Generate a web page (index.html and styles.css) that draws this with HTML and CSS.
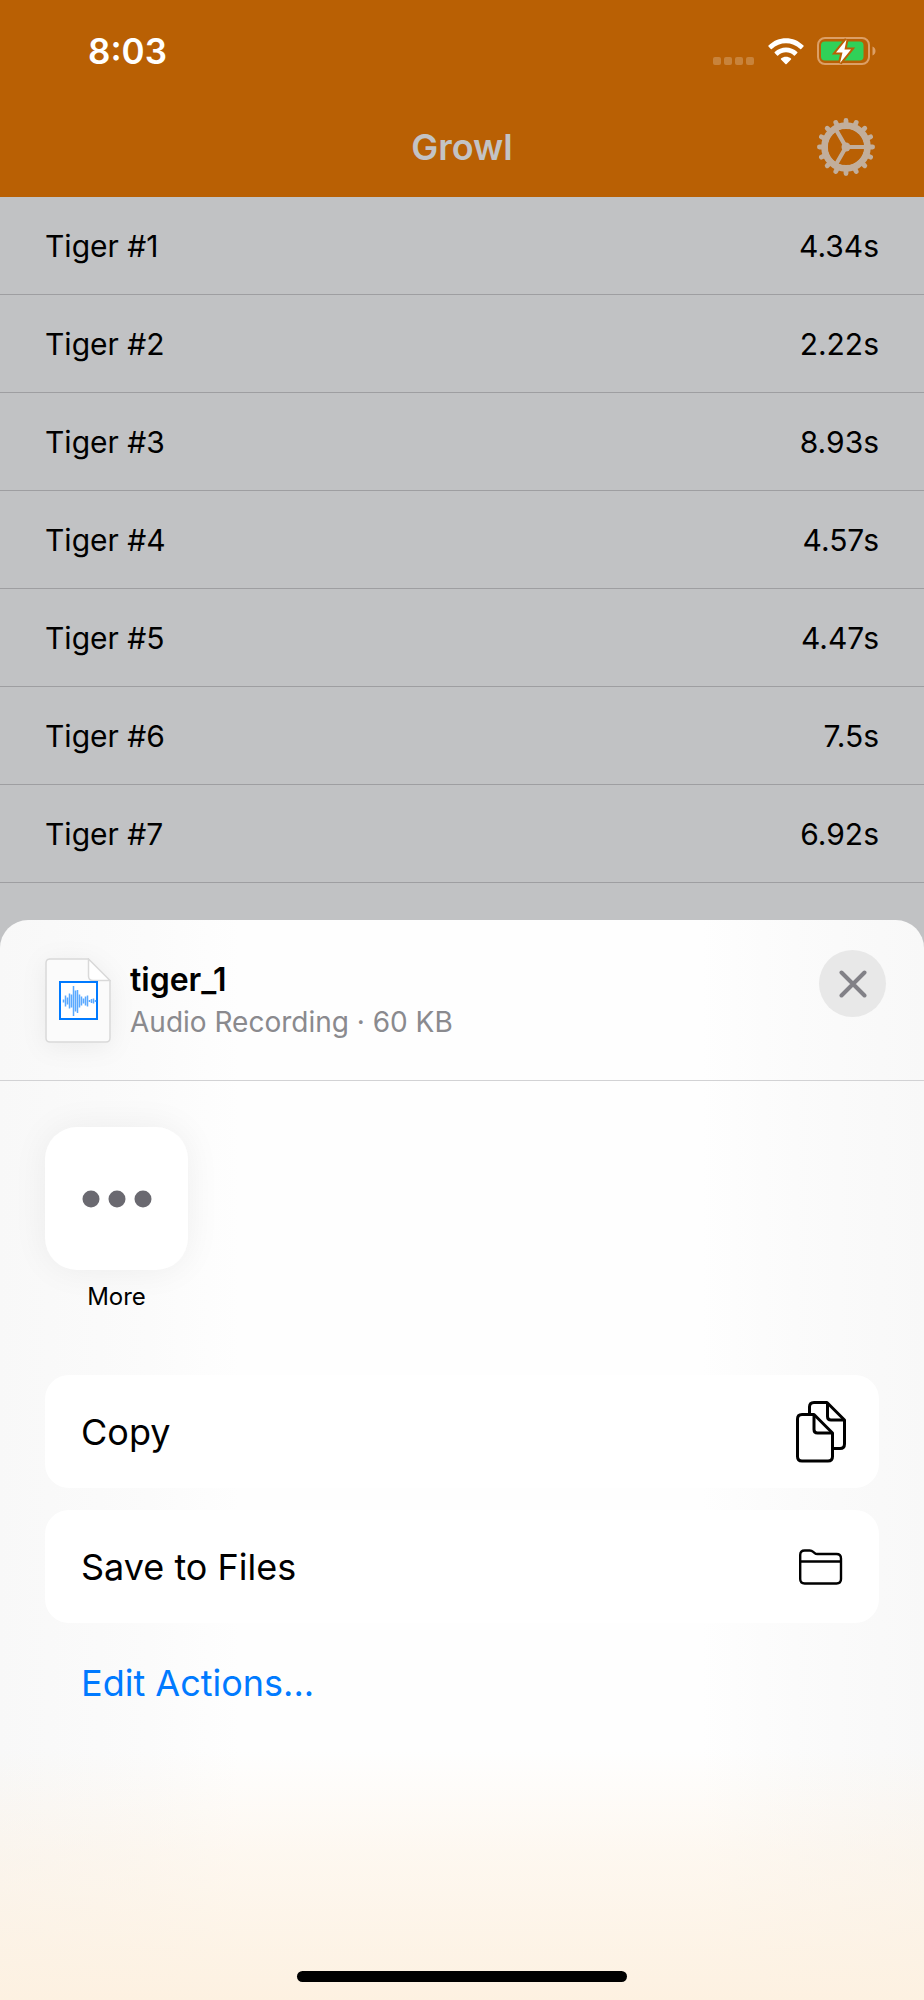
FILE: index.html
```html
<!DOCTYPE html>
<html lang="en">
<head>
<meta charset="utf-8">
<meta name="viewport" content="width=device-width, initial-scale=1">
<title>Growl</title>
<link rel="stylesheet" href="styles.css">
</head>
<body>
<div class="app">
  <header class="top">
    <div class="status">
      <span class="time">8:03</span>
      <div class="status-icons">
        <svg width="42" height="8" viewBox="0 0 42 8" fill="#fff" fill-opacity=".22" aria-hidden="true"><rect width="8" height="8" rx="2"/><rect x="11" width="8" height="8" rx="2"/><rect x="22" width="8" height="8" rx="2"/><rect x="33" width="8" height="8" rx="2"/></svg>
        <svg width="36" height="27" viewBox="0 0 36 27" fill="#fff" aria-hidden="true">
          <path d="M.5 7.6C10-2.2 26-2.2 35.5 7.6c.3.3.3.7 0 1l-2.300 2.400c-.3.3-.7.300-1 0-8-7.700-20.400-7.700-28.400 0-.3.300-.7.300-1 0L.5 8.600c-.3-.3-.3-.7 0-1Z"/>
          <path d="M6.700 14.100c6.200-6.100 16.400-6.100 22.600 0 .3.300.3.700 0 1L26.900 17.500c-.3.300-.7.300-1 0-4.500-4.200-11.300-4.200-15.800 0-.3.300-.7.300-1 0L6.700 15.100c-.3-.3-.3-.7 0-1Z"/>
          <path d="M13 20.500c2.800-2.400 7.200-2.400 10 0 .3.300.3.700 0 1l-4.400 4.500c-.4.400-.8.400-1.200 0L13 21.500c-.3-.3-.3-.7 0-1Z"/>
        </svg>
        <svg width="59" height="28" viewBox="0 0 59 28" aria-hidden="true">
          <rect x="1" y="1" width="51" height="26" rx="7" fill="none" stroke="#dc9f66" stroke-width="2"/>
          <path d="M55.500 9.500c4 1.500 4 7.500 0 9Z" fill="#dc9f66"/>
          <rect x="4" y="4.500" width="42.500" height="19" rx="4" fill="#30d158"/>
          <path d="M29.500 2.500 19 15.500h6.500L23 26 34 12.500H27.500Z" fill="#fff" stroke="#b96004" stroke-width="4" paint-order="stroke"/>
        </svg>
      </div>
    </div>
    <div class="nav">
      <h1 class="nav-title">Growl</h1>
      <button class="settings" type="button" aria-label="Settings">
        <svg width="60" height="60" viewBox="-30 -30 60 60" fill="none" stroke="#c2ae9b" aria-hidden="true">
          <circle r="21.300" stroke-width="7"/>
          <g stroke-width="4.800" stroke-linecap="round">
            <path d="M0-26.600V26.600M-26.600 0H-22M22 0H26.600M-18.800-18.800-16-16M18.800-18.800 16-16M-18.800 18.800-16 16M18.800 18.800 16 16"/>
            <path d="M-10.200-24.600-8.500-21M10.200-24.600 8.500-21M-10.200 24.600-8.500 21M10.200 24.600 8.500 21M-24.600-10.200-21-8.500M24.600-10.200 21-8.500M-24.600 10.200-21 8.500M24.600 10.200 21 8.500"/>
          </g>
          <circle r="18" fill="#b96004" stroke="none"/>
          <path d="M0 0H19M0 0-9.500-16.500M0 0-9.500 16.500" stroke-width="4.200"/>
          <circle r="4.500" fill="#c2ae9b" stroke="none"/>
        </svg>
      </button>
    </div>
  </header>

  <ul class="tigers">
    <li class="tiger"><span>Tiger #1</span><span>4.34s</span></li>
    <li class="tiger"><span>Tiger #2</span><span>2.22s</span></li>
    <li class="tiger"><span>Tiger #3</span><span>8.93s</span></li>
    <li class="tiger"><span>Tiger #4</span><span>4.57s</span></li>
    <li class="tiger"><span>Tiger #5</span><span>4.47s</span></li>
    <li class="tiger"><span>Tiger #6</span><span>7.5s</span></li>
    <li class="tiger"><span>Tiger #7</span><span>6.92s</span></li>
  </ul>

  <section class="sheet" aria-label="Share">
    <header class="sheet-head">
      <svg class="file-icon" width="66" height="85" viewBox="0 0 66 85" aria-hidden="true">
        <path d="M4 1H43L65 23V80q0 4-4 4H5q-4 0-4-4V5q0-4 4-4Z" fill="#fbfbfb" stroke="#d9d9d9" stroke-width="1.500"/>
        <path d="M43.500 1V18q0 4.500 4.500 4.500H65Z" fill="#fff" stroke="#d9d9d9" stroke-width="1.500"/>
        <rect x="15" y="24" width="37" height="37" fill="#fff" stroke="#007aff" stroke-width="2"/>
        <path d="M18.500 41.500v3M20.500 37.500v11M22.500 39.500v7M24.500 35.500v15M26.500 36.500v13M28.500 28v30M30.500 32.500v21M32.500 32v23M34.500 36.500v13M36.500 38.500v9M38.500 40.500v5M40.500 38.500v9M42.500 37.500v11M44.500 42v2M46.500 41v4M48.500 40.500v5M50.500 42v2" stroke="#5aa9ff" stroke-width="1.500"/>
      </svg>
      <div class="file-text">
        <h2 class="file-name">tiger_1</h2>
        <p class="file-meta">Audio Recording · 60 KB</p>
      </div>
      <button class="close" type="button" aria-label="Close">
        <svg width="28" height="28" viewBox="0 0 28 28" fill="none" stroke="#828187" stroke-width="4" stroke-linecap="round" aria-hidden="true"><path d="M2.500 2.500 25.500 25.500M25.500 2.500 2.500 25.500"/></svg>
      </button>
    </header>

    <div class="apps">
      <button class="app-item" type="button">
        <span class="app-tile">
          <svg width="70" height="18" viewBox="0 0 70 18" fill="#6a6970" aria-hidden="true"><circle cx="9" cy="9" r="8.500"/><circle cx="35" cy="9" r="8.500"/><circle cx="61" cy="9" r="8.500"/></svg>
        </span>
        <span class="app-label">More</span>
      </button>
    </div>

    <div class="actions">
      <button class="action" type="button">
        <span>Copy</span>
        <svg width="50" height="62" viewBox="0 0 50 62" fill="none" stroke="#000" stroke-width="3" stroke-linejoin="round" aria-hidden="true">
          <path d="M13.500 13V6q0-4.500 4.500-4.500H31L48.500 19V43q0 4.500-4.500 4.500H37"/>
          <path d="M31.500 2V15.500q0 3.500 3.500 3.500H48"/>
          <path d="M6 13.500H18L36.500 32V55.500q0 4.500-4.500 4.500H6q-4.500 0-4.500-4.500V18q0-4.500 4.500-4.500Z"/>
          <path d="M18 14V28.500q0 3.500 3.500 3.500H36"/>
        </svg>
      </button>
      <button class="action" type="button">
        <span>Save to Files</span>
        <svg width="50" height="36" viewBox="0 0 50 36" fill="none" stroke="#000" stroke-width="2.400" stroke-linejoin="round" aria-hidden="true">
          <path d="M4.200 12V6q0-4.500 4.500-4.500h5q2 0 3.500 1.300l1.200 1q1.300 1.200 3 1.200H40.500q4.500 0 4.500 4.500V30q0 4.500-4.500 4.500H8.700Q4.200 34.500 4.200 30ZM4.200 12.500H45"/>
        </svg>
      </button>
      <button class="edit" type="button">Edit Actions...</button>
    </div>

    <div class="home-indicator"></div>
  </section>
</div>
</body>
</html>
```
FILE: styles.css
```css
* {
  box-sizing: border-box;
}

body {
  margin: 0;
  background: #c1c2c4;
  color: #000;
  font-family: Inter, "Liberation Sans", sans-serif;
}

h1, h2, p, ul {
  margin: 0;
  padding: 0;
}

button {
  padding: 0;
  border: 0;
  background: none;
  color: inherit;
  font: inherit;
  cursor: pointer;
}

svg {
  display: block;
  flex: none;
}

.app {
  display: flex;
  flex-direction: column;
  min-height: 100vh;
}

.top {
  background: #b96004;
}

.status {
  display: flex;
  justify-content: space-between;
  align-items: center;
  height: 101px;
  padding: 0 48px 0 88px;
}

.time {
  color: #fff;
  font-size: 35px;
  font-weight: 600;
}

.status-icons {
  display: flex;
  align-items: flex-end;
  gap: 13px;
}

.nav {
  display: grid;
  grid-template-columns: 1fr auto 1fr;
  align-items: center;
  height: 96px;
  padding: 0 48px 5px;
}

.nav-title {
  grid-column: 2;
  color: #c3c3c5;
  font-size: 36px;
  font-weight: 600;
}

.settings {
  justify-self: end;
}

.tigers {
  list-style: none;
  margin-bottom: 37px;
}

.tiger {
  display: flex;
  justify-content: space-between;
  align-items: center;
  height: 98px;
  padding: 0 45px;
  border-bottom: 1px solid #9e9ea1;
  font-size: 30px;
}

.sheet {
  display: flex;
  flex: 1;
  flex-direction: column;
  border-radius: 28px 28px 0 0;
  background:
    linear-gradient(to bottom, rgba(253, 241, 225, 0) 77%, rgba(253, 241, 225, 0.5) 87%, rgba(253, 241, 225, 1) 100%),
    linear-gradient(to right, #f8f8f8, #fbfbfb 16%, #fefefe 26%, #fefefe 76%, #fbfbfb 86%, #f8f8f8);
}

.sheet-head {
  display: flex;
  align-items: flex-start;
  height: 161px;
  padding: 30px 38px 0 45px;
  border-bottom: 1px solid #d2d2d4;
}

.file-icon {
  margin-top: 8px;
  filter: drop-shadow(0 4px 12px rgba(0, 0, 0, 0.06));
}

.file-text {
  flex: 1;
  padding: 8px 0 0 19px;
}

.file-name {
  font-size: 32px;
  font-weight: 600;
  line-height: 44px;
}

.file-meta {
  color: #8a8a8e;
  font-size: 28px;
  line-height: 40px;
}

.close {
  display: grid;
  place-items: center;
  width: 67px;
  height: 67px;
  border-radius: 50%;
  background: #e8e8e8;
}

.apps {
  display: flex;
  padding: 46px 45px 0;
}

.app-item {
  display: flex;
  flex-direction: column;
  align-items: center;
  gap: 12px;
}

.app-tile {
  display: grid;
  place-items: center;
  width: 143px;
  height: 143px;
  border-radius: 32px;
  background: #fff;
  box-shadow: 0 0 36px rgba(0, 0, 0, 0.06);
}

.app-label {
  font-size: 24px;
  line-height: 30px;
}

.actions {
  display: flex;
  flex-direction: column;
  gap: 22px;
  padding: 63px 45px 0;
}

.action {
  display: flex;
  justify-content: space-between;
  align-items: center;
  height: 113px;
  padding: 0 33px 0 36px;
  border-radius: 24px;
  background: #fff;
  font-size: 36px;
}

.edit {
  align-self: flex-start;
  padding: 16px 36px;
  color: #007aff;
  font-size: 36px;
  line-height: 44px;
}

.home-indicator {
  align-self: center;
  width: 330px;
  height: 11px;
  margin: auto 0 18px;
  border-radius: 6px;
  background: #000;
}
```
